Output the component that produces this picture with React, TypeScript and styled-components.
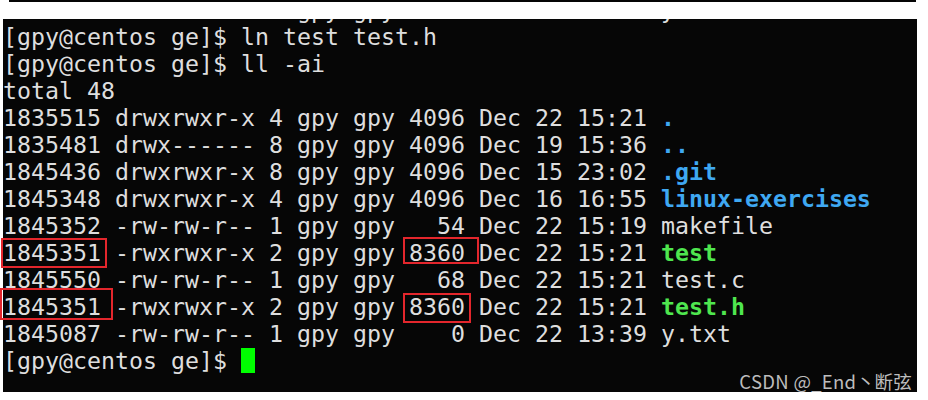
import React from "react";
import styled, { createGlobalStyle } from "styled-components";

const GlobalStyle = createGlobalStyle`
  html, body { margin: 0; padding: 0; background: #ffffff; }
`;

const Page = styled.div`
  position: relative;
  width: 928px;
  height: 400px;
  background: #ffffff;
  overflow: hidden;
`;

const TopRule = styled.div`
  margin-left: 9px;
  width: 907px;
  height: 2px;
  background: #050505;
`;

const Terminal = styled.div`
  margin-top: 17px;
  margin-left: 3px;
  width: 914px;
  height: 373px;
  background: #060606;
  overflow: hidden;
  box-sizing: border-box;
  padding-top: 4px;
  font-family: "DejaVu Sans Mono", "Liberation Mono", monospace;
  font-size: 23.26px;
  line-height: 27px;
  color: #dedede;
  display: flex;
  flex-direction: column;
`;

const Line = styled.div<{ $partial?: boolean }>`
  white-space: pre;
  height: 27px;
  flex: none;
  margin-top: ${(p) => (p.$partial ? "-27px" : "0")};
`;

const Name = styled.span<{ $kind: "dir" | "exec" | "plain" }>`
  color: ${(p) =>
    p.$kind === "dir" ? "#3fa8f2" : p.$kind === "exec" ? "#4fe64f" : "#dedede"};
  font-weight: ${(p) => (p.$kind === "plain" ? "normal" : "bold")};
`;

const Cursor = styled.span`
  display: inline-block;
  width: 14px;
  height: 25px;
  margin-top: 1px;
  vertical-align: top;
  background: #00ff00;
`;

const Mark = styled.div`
  position: absolute;
  box-sizing: border-box;
  border: 2.5px solid #e3262c;
`;

const Watermark = styled.div`
  position: absolute;
  right: 16px;
  bottom: 7px;
  font-family: "Noto Sans CJK SC", "Noto Sans", sans-serif;
  font-size: 18.5px;
  letter-spacing: 0.3px;
  line-height: 24px;
  color: #bdbdbd;
  white-space: nowrap;
`;

const Mid = styled.span`
  display: inline-block;
  width: 18px;
  text-align: center;
`;

type Row = { meta: string; name: string; kind: "dir" | "exec" | "plain" };

const rows: Row[] = [
  { meta: "1835515 drwxrwxr-x 4 gpy gpy 4096 Dec 22 15:21 ", name: ".", kind: "dir" },
  { meta: "1835481 drwx------ 8 gpy gpy 4096 Dec 19 15:36 ", name: "..", kind: "dir" },
  { meta: "1845436 drwxrwxr-x 8 gpy gpy 4096 Dec 15 23:02 ", name: ".git", kind: "dir" },
  { meta: "1845348 drwxrwxr-x 4 gpy gpy 4096 Dec 16 16:55 ", name: "linux-exercises", kind: "dir" },
  { meta: "1845352 -rw-rw-r-- 1 gpy gpy   54 Dec 22 15:19 ", name: "makefile", kind: "plain" },
  { meta: "1845351 -rwxrwxr-x 2 gpy gpy 8360 Dec 22 15:21 ", name: "test", kind: "exec" },
  { meta: "1845550 -rw-rw-r-- 1 gpy gpy   68 Dec 22 15:21 ", name: "test.c", kind: "plain" },
  { meta: "1845351 -rwxrwxr-x 2 gpy gpy 8360 Dec 22 15:21 ", name: "test.h", kind: "exec" },
  { meta: "1845087 -rw-rw-r-- 1 gpy gpy    0 Dec 22 13:39 ", name: "y.txt", kind: "plain" },
];

const marks = [
  { left: 1, top: 238, width: 106, height: 30 },
  { left: 0, top: 288, width: 113, height: 32 },
  { left: 403, top: 237, width: 76, height: 27 },
  { left: 403, top: 293, width: 68, height: 30 },
];

export default function App() {
  return (
    <>
      <GlobalStyle />
      <Page>
        <TopRule />
        <Terminal>
          <Line $partial>{"1845087 -rw-rw-r-- 1 gpy gpy    0 Dec 22 13:39 y.txt"}</Line>
          <Line>{"[gpy@centos ge]$ ln test test.h"}</Line>
          <Line>{"[gpy@centos ge]$ ll -ai"}</Line>
          <Line>{"total 48"}</Line>
          {rows.map((r, i) => (
            <Line key={i}>
              {r.meta}
              <Name $kind={r.kind}>{r.name}</Name>
            </Line>
          ))}
          <Line>
            {"[gpy@centos ge]$ "}
            <Cursor />
          </Line>
        </Terminal>
        {marks.map((m, i) => (
          <Mark
            key={i}
            style={{ left: m.left, top: m.top, width: m.width, height: m.height }}
          />
        ))}
        <Watermark>
          CSDN @_End<Mid>丶</Mid>断弦
        </Watermark>
      </Page>
    </>
  );
}
